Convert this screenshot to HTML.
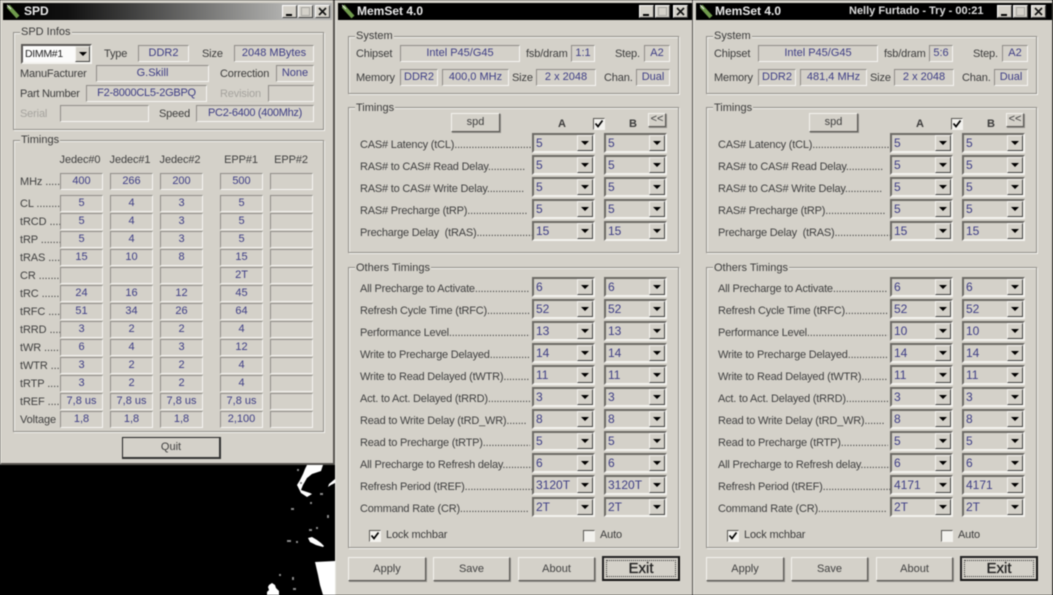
<!DOCTYPE html>
<html><head><meta charset="utf-8"><title>MemSet</title>
<style>
html,body{margin:0;padding:0;background:#000;width:1053px;height:595px;overflow:hidden}
#p{position:absolute;left:0;top:0;width:1053px;height:595px;overflow:hidden;background:#000;filter:blur(.4px);font:11px "Liberation Sans",Arial,sans-serif;color:#3c3c3c}
.w{position:absolute;top:0;background:#d4d1c9;box-sizing:border-box;border-left:1px solid #e8e6e0;border-right:1px solid #55534f}
.w>*,.r>*{position:absolute}
.tb{left:2px;top:3px;height:17px;background:#000;color:#e8e8e8;font-weight:bold;font-size:12px;line-height:17px;white-space:nowrap}
.tb span{position:absolute;top:0}
.tb svg{position:absolute;left:4px;top:1px}
.wb{width:15px;height:13px;top:5px;background:#d4d1c9;box-sizing:border-box;border:1px solid;border-color:#fff #404040 #404040 #fff}
.wb svg{position:absolute;left:0;top:0}
.g{box-sizing:border-box;border:1px solid #918f8a;box-shadow:1px 1px 0 #f4f3ef,inset 1px 1px 0 #f4f3ef}
.lg{line-height:13px;background:#d4d1c9;padding:0 1px;white-space:nowrap}
.l{line-height:14px;white-space:nowrap;letter-spacing:-.15px}
.d{color:#a5a39e}
.b{box-sizing:border-box;border:1px solid;border-color:#8f8d88 #f6f5f2 #f6f5f2 #8f8d88;color:#3d3d85;text-align:center;white-space:nowrap;overflow:hidden}
.b16{height:17px;line-height:14px}
.r{position:absolute;left:0;width:100%;height:20px}
.r u{left:24px;top:5px;width:172px;overflow:hidden;text-decoration:none;line-height:14px;white-space:nowrap;color:#404040;letter-spacing:-.2px}
.c{top:0;width:63px;height:20px;box-sizing:border-box;border:2px solid;border-color:#6c6a66 #f4f3ef #f4f3ef #6c6a66;background:#d4d1c9;color:#3d3d85;font-size:12px;line-height:17px;padding-left:2px}
.ca{left:196px}.cb{left:268px}
.c i{position:absolute;right:0;top:0;width:16px;height:16px;box-sizing:border-box;background:#d4d1c9;border:1px solid;border-color:#f4f3ef #404040 #404040 #f4f3ef}
.c i:after{content:"";position:absolute;left:3px;top:5px;border:4px solid transparent;border-top:4px solid #000;border-bottom:0}
.t{position:absolute;left:0;width:100%;height:17px}
.t>*{position:absolute;top:0}
.t u{left:19px;top:2px;text-decoration:none;line-height:14px;white-space:nowrap;width:40px;overflow:hidden;color:#404040;letter-spacing:-.1px}
.j0{left:59px;width:43px}.j1{left:109px;width:43px}.j2{left:159px;width:43px}.j3{left:219px;width:43px}.j4{left:269px;width:43px}
.h{text-align:center;line-height:14px;width:50px;top:153px;white-space:nowrap;color:#404040;letter-spacing:-.1px}
.btn{box-sizing:border-box;border:1px solid;border-color:#f4f3ef #55534f #55534f #f4f3ef;text-align:center;background:#d4d1c9;color:#404040;box-shadow:1px 1px 0 #918f8a}
.ck{box-sizing:border-box;width:12px;height:12px;border:1px solid;border-color:#5a5855 #f4f3ef #f4f3ef #5a5855;background:#f2f1ed}
.ck svg{position:absolute;left:0;top:0}
.ex{box-sizing:border-box;border:2px solid;border-color:#222 #111 #111 #222;text-align:center;font-size:15px;color:#222;-webkit-text-stroke:.3px #222}
.ex:after{content:"";position:absolute;left:2px;top:2px;right:2px;bottom:2px;border:1px dotted #333}
</style></head><body><div id="p">

<svg style="position:absolute;left:255px;top:460px" width="85" height="135" viewBox="0 0 85 135" fill="#fff">
<path d="M52 5l16 0-2 6-9 3-5 4-4 7-2 5 9 3 2 1-5 3-6-4-2-4-2-4 3-5 3-6 2-5z"/>
<path d="M74 24l6-5 0 4-4 2-3 2z"/>
<path d="M53 78l4-1 5 3 4 3 3 3-1 1-7-2-6-3z"/>
<path d="M60 102l20-1 0 34-12 0-3-10-2-10z"/>
<path d="M14 125l3-2 3 2 1 3 3 3 0 4-12 0 0-3 2-2-1-3z"/>
<g fill="#8a8a8a"><rect x="42" y="9" width="2" height="2"/><rect x="45" y="22" width="2" height="2"/><rect x="36" y="48" width="3" height="2"/><rect x="65" y="33" width="3" height="2"/><rect x="72" y="55" width="2" height="3"/><rect x="54" y="69" width="3" height="2"/><rect x="61" y="67" width="2" height="2"/><rect x="32" y="80" width="4" height="2"/><rect x="41" y="81" width="2" height="2"/><rect x="37" y="117" width="2" height="3"/><rect x="38" y="128" width="3" height="2"/><rect x="24" y="114" width="2" height="2"/><rect x="55" y="42" width="2" height="2"/></g>
</svg>

<!-- SPD -->
<div class="w" style="left:0;width:335px;height:465px;border-bottom:2px solid #55534f;border-right:2px solid #55534f">
<div class="tb" style="width:329px;background:linear-gradient(90deg,#000 0,#111 20%,#b0b0ae 85%)">
<svg width="14" height="16" viewBox="0 0 14 16"><path d="M1 2l10 11" stroke="#6f9a4c" stroke-width="4"/><path d="M0 1l4 4" stroke="#e8e8e8"/></svg><span style="left:21px">SPD</span></div>
<div class="wb" style="left:281px"><svg width="13" height="11"><rect x="3" y="8" width="6" height="2" fill="#000"/></svg></div>
<div class="wb" style="left:297px"><svg width="13" height="11"><rect x="2.5" y="1.5" width="8" height="8" fill="none" stroke="#a8a6a2"/></svg></div>
<div class="wb" style="left:314px"><svg width="13" height="11"><path d="M3 2l7 7M10 2l-7 7" stroke="#111" stroke-width="1.6"/></svg></div>

<div class="g" style="left:12px;top:32px;width:311px;height:98px"></div>
<div class="lg" style="left:19px;top:26px">SPD Infos</div>
<div style="left:20px;top:44px;width:71px;height:20px;box-sizing:border-box;border:2px solid;border-color:#5a5855 #f4f3ef #f4f3ef #5a5855;background:#fbfbfa;color:#222;line-height:17px;padding-left:2px;font-size:10.5px;letter-spacing:-.3px">DIMM#1</div>
<div style="left:74px;top:46px;width:15px;height:16px;box-sizing:border-box;background:#d4d1c9;border:1px solid;border-color:#f4f3ef #404040 #404040 #f4f3ef"><div style="position:absolute;left:3px;top:5px;border:4px solid transparent;border-top:4px solid #000;border-bottom:0"></div></div>
<div class="l" style="left:103px;top:47px">Type</div>
<div class="b b16" style="left:137px;top:45px;width:51px">DDR2</div>
<div class="l" style="left:201px;top:47px">Size</div>
<div class="b b16" style="left:233px;top:45px;width:80px">2048 MBytes</div>
<div class="l" style="left:19px;top:67px">ManuFacturer</div>
<div class="b b16" style="left:95px;top:65px;width:113px">G.Skill</div>
<div class="l" style="left:219px;top:67px">Correction</div>
<div class="b b16" style="left:275px;top:65px;width:38px">None</div>
<div class="l" style="left:19px;top:87px;letter-spacing:-.25px">Part Number</div>
<div class="b b16" style="left:85px;top:85px;width:121px;letter-spacing:-.25px">F2-8000CL5-2GBPQ</div>
<div class="l d" style="left:219px;top:87px">Revision</div>
<div class="b b16" style="left:267px;top:85px;width:46px"></div>
<div class="l d" style="left:19px;top:107px">Serial</div>
<div class="b b16" style="left:59px;top:105px;width:89px"></div>
<div class="l" style="left:158px;top:107px">Speed</div>
<div class="b b16" style="left:195px;top:105px;width:118px;letter-spacing:-.3px">PC2-6400 (400Mhz)</div>

<div class="g" style="left:12px;top:140px;width:311px;height:292px"></div>
<div class="lg" style="left:19px;top:134px">Timings</div>
<div class="h" style="left:54px">Jedec#0</div><div class="h" style="left:104px">Jedec#1</div><div class="h" style="left:154px">Jedec#2</div><div class="h" style="left:215px">EPP#1</div><div class="h" style="left:265px">EPP#2</div>

<div class="t" style="top:173px"><u>MHz .......</u><div class="b b16 j0">400</div><div class="b b16 j1">266</div><div class="b b16 j2">200</div><div class="b b16 j3">500</div><div class="b b16 j4"></div></div>
<div class="t" style="top:195px"><u>CL ..............</u><div class="b b16 j0">5</div><div class="b b16 j1">4</div><div class="b b16 j2">3</div><div class="b b16 j3">5</div><div class="b b16 j4"></div></div>
<div class="t" style="top:213px"><u>tRCD .....</u><div class="b b16 j0">5</div><div class="b b16 j1">4</div><div class="b b16 j2">3</div><div class="b b16 j3">5</div><div class="b b16 j4"></div></div>
<div class="t" style="top:231px"><u>tRP ..........</u><div class="b b16 j0">5</div><div class="b b16 j1">4</div><div class="b b16 j2">3</div><div class="b b16 j3">5</div><div class="b b16 j4"></div></div>
<div class="t" style="top:249px"><u>tRAS .....</u><div class="b b16 j0">15</div><div class="b b16 j1">10</div><div class="b b16 j2">8</div><div class="b b16 j3">15</div><div class="b b16 j4"></div></div>
<div class="t" style="top:267px"><u>CR ..............</u><div class="b b16 j0"></div><div class="b b16 j1"></div><div class="b b16 j2"></div><div class="b b16 j3">2T</div><div class="b b16 j4"></div></div>
<div class="t" style="top:285px"><u>tRC ..........</u><div class="b b16 j0">24</div><div class="b b16 j1">16</div><div class="b b16 j2">12</div><div class="b b16 j3">45</div><div class="b b16 j4"></div></div>
<div class="t" style="top:303px"><u>tRFC .....</u><div class="b b16 j0">51</div><div class="b b16 j1">34</div><div class="b b16 j2">26</div><div class="b b16 j3">64</div><div class="b b16 j4"></div></div>
<div class="t" style="top:321px"><u>tRRD ....</u><div class="b b16 j0">3</div><div class="b b16 j1">2</div><div class="b b16 j2">2</div><div class="b b16 j3">4</div><div class="b b16 j4"></div></div>
<div class="t" style="top:339px"><u>tWR .......</u><div class="b b16 j0">6</div><div class="b b16 j1">4</div><div class="b b16 j2">3</div><div class="b b16 j3">12</div><div class="b b16 j4"></div></div>
<div class="t" style="top:357px"><u>tWTR ....</u><div class="b b16 j0">3</div><div class="b b16 j1">2</div><div class="b b16 j2">2</div><div class="b b16 j3">4</div><div class="b b16 j4"></div></div>
<div class="t" style="top:375px"><u>tRTP ......</u><div class="b b16 j0">3</div><div class="b b16 j1">2</div><div class="b b16 j2">2</div><div class="b b16 j3">4</div><div class="b b16 j4"></div></div>
<div class="t" style="top:393px"><u>tREF .....</u><div class="b b16 j0">7,8 us</div><div class="b b16 j1">7,8 us</div><div class="b b16 j2">7,8 us</div><div class="b b16 j3">7,8 us</div><div class="b b16 j4"></div></div>
<div class="t" style="top:411px"><u>Voltage</u><div class="b b16 j0">1,8</div><div class="b b16 j1">1,8</div><div class="b b16 j2">1,8</div><div class="b b16 j3">2,100</div><div class="b b16 j4"></div></div>

<div class="btn" style="left:121px;top:437px;width:99px;height:22px;line-height:19px;border:1px solid #222;border-right:2px solid #333;border-bottom:2px solid #333;box-shadow:none">Quit</div>
</div>

<!-- MemSet 1 -->
<div class="w" style="left:335px;width:358px;height:595px">
<div class="tb" style="width:354px"><svg width="14" height="16" viewBox="0 0 14 16"><path d="M1 2l10 11" stroke="#6f9a4c" stroke-width="4"/><path d="M0 1l4 4" stroke="#e8e8e8"/></svg><span style="left:19px">MemSet 4.0</span></div>
<div class="wb" style="left:303px"><svg width="13" height="11"><rect x="3" y="8" width="6" height="2" fill="#000"/></svg></div>
<div class="wb" style="left:319px"><svg width="13" height="11"><rect x="2.5" y="1.5" width="8" height="8" fill="none" stroke="#a8a6a2"/></svg></div>
<div class="wb" style="left:337px"><svg width="13" height="11"><path d="M3 2l7 7M10 2l-7 7" stroke="#111" stroke-width="1.6"/></svg></div>

<div class="g" style="left:12px;top:36px;width:331px;height:58px"></div>
<div class="lg" style="left:19px;top:30px">System</div>
<div class="l" style="left:20px;top:47px">Chipset</div>
<div class="b b16" style="left:64px;top:45px;width:120px">Intel P45/G45</div>
<div class="l" style="left:190px;top:47px">fsb/dram</div>
<div class="b b16" style="left:235px;top:45px;width:24px">1:1</div>
<div class="l" style="left:279px;top:47px">Step.</div>
<div class="b b16" style="left:308px;top:45px;width:26px">A2</div>
<div class="l" style="left:20px;top:71px">Memory</div>
<div class="b b16" style="left:64px;top:69px;width:38px">DDR2</div>
<div class="b b16" style="left:106px;top:69px;width:67px">400,0 MHz</div>
<div class="l" style="left:176px;top:71px">Size</div>
<div class="b b16" style="left:200px;top:69px;width:60px">2 x 2048</div>
<div class="l" style="left:268px;top:71px">Chan.</div>
<div class="b b16" style="left:300px;top:69px;width:34px">Dual</div>

<div class="g" style="left:12px;top:107px;width:331px;height:146px"></div>
<div class="lg" style="left:19px;top:102px">Timings</div>
<div class="btn" style="left:115px;top:113px;width:49px;height:19px;line-height:16px">spd</div>
<div class="l" style="left:222px;top:117px;font-weight:bold">A</div>
<div class="ck" style="left:257px;top:118px"><svg width="10" height="10"><path d="M1.5 4.5l2.5 3 4.5-6" fill="none" stroke="#000" stroke-width="1.7"/></svg></div>
<div class="l" style="left:293px;top:117px;font-weight:bold">B</div>
<div class="btn" style="left:312px;top:113px;width:18px;height:14px;line-height:10px">&lt;&lt;</div>

<div class="r" style="top:133px"><u>CAS# Latency (tCL)..............................................</u><div class="c ca">5<i></i></div><div class="c cb">5<i></i></div></div>
<div class="r" style="top:155px"><u style="width:165px">RAS# to CAS# Read Delay..............................</u><div class="c ca">5<i></i></div><div class="c cb">5<i></i></div></div>
<div class="r" style="top:177px"><u style="width:165px">RAS# to CAS# Write Delay..............................</u><div class="c ca">5<i></i></div><div class="c cb">5<i></i></div></div>
<div class="r" style="top:199px"><u style="width:168px">RAS# Precharge (tRP)......................................</u><div class="c ca">5<i></i></div><div class="c cb">5<i></i></div></div>
<div class="r" style="top:221px"><u>Precharge Delay&nbsp; (tRAS)...................................</u><div class="c ca">15<i></i></div><div class="c cb">15<i></i></div></div>

<div class="g" style="left:12px;top:267px;width:331px;height:281px"></div>
<div class="lg" style="left:19px;top:262px">Others Timings</div>
<div class="r" style="top:277px"><u style="width:170px">All Precharge to Activate......................................</u><div class="c ca">6<i></i></div><div class="c cb">6<i></i></div></div>
<div class="r" style="top:299px"><u style="width:170px">Refresh Cycle Time (tRFC)..............................</u><div class="c ca">52<i></i></div><div class="c cb">52<i></i></div></div>
<div class="r" style="top:321px"><u style="width:170px">Performance Level.............................................</u><div class="c ca">13<i></i></div><div class="c cb">13<i></i></div></div>
<div class="r" style="top:343px"><u style="width:170px">Write to Precharge Delayed..............................</u><div class="c ca">14<i></i></div><div class="c cb">14<i></i></div></div>
<div class="r" style="top:365px"><u style="width:170px">Write to Read Delayed (tWTR)..........................</u><div class="c ca">11<i></i></div><div class="c cb">11<i></i></div></div>
<div class="r" style="top:387px"><u style="width:170px">Act. to Act. Delayed (tRRD)................................</u><div class="c ca">3<i></i></div><div class="c cb">3<i></i></div></div>
<div class="r" style="top:409px"><u style="width:166px">Read to Write Delay (tRD_WR)..........................</u><div class="c ca">8<i></i></div><div class="c cb">8<i></i></div></div>
<div class="r" style="top:431px"><u style="width:170px">Read to Precharge (tRTP)..................................</u><div class="c ca">5<i></i></div><div class="c cb">5<i></i></div></div>
<div class="r" style="top:453px"><u>All Precharge to Refresh delay..........................</u><div class="c ca">6<i></i></div><div class="c cb">6<i></i></div></div>
<div class="r" style="top:475px"><u>Refresh Period (tREF)......................................</u><div class="c ca">3120T<i></i></div><div class="c cb">3120T<i></i></div></div>
<div class="r" style="top:497px"><u style="width:168px">Command Rate (CR)........................................</u><div class="c ca">2T<i></i></div><div class="c cb">2T<i></i></div></div>

<div class="ck" style="left:33px;top:530px"><svg width="10" height="10"><path d="M1.5 4.5l2.5 3 4.5-6" fill="none" stroke="#000" stroke-width="1.7"/></svg></div>
<div class="l" style="left:50px;top:528px">Lock mchbar</div>
<div class="ck" style="left:247px;top:530px"></div>
<div class="l" style="left:264px;top:528px">Auto</div>

<div class="btn" style="left:12px;top:557px;width:78px;height:24px;line-height:22px">Apply</div>
<div class="btn" style="left:97px;top:557px;width:77px;height:24px;line-height:22px">Save</div>
<div class="btn" style="left:182px;top:557px;width:77px;height:24px;line-height:22px">About</div>
<div class="ex" style="left:266px;top:556px;width:78px;height:25px;line-height:21px">Exit</div>
</div>

<!-- MemSet 2 -->
<div class="w" style="left:693px;width:360px;height:595px">
<div class="tb" style="width:356px"><svg width="14" height="16" viewBox="0 0 14 16"><path d="M1 2l10 11" stroke="#6f9a4c" stroke-width="4"/><path d="M0 1l4 4" stroke="#e8e8e8"/></svg><span style="left:19px">MemSet 4.0</span><span style="left:153px;color:#dcdcdc;font-size:11px">Nelly Furtado - Try - 00:21</span></div>
<div class="wb" style="left:303px"><svg width="13" height="11"><rect x="3" y="8" width="6" height="2" fill="#000"/></svg></div>
<div class="wb" style="left:319px"><svg width="13" height="11"><rect x="2.5" y="1.5" width="8" height="8" fill="none" stroke="#a8a6a2"/></svg></div>
<div class="wb" style="left:337px"><svg width="13" height="11"><path d="M3 2l7 7M10 2l-7 7" stroke="#111" stroke-width="1.6"/></svg></div>

<div class="g" style="left:12px;top:36px;width:331px;height:58px"></div>
<div class="lg" style="left:19px;top:30px">System</div>
<div class="l" style="left:20px;top:47px">Chipset</div>
<div class="b b16" style="left:64px;top:45px;width:120px">Intel P45/G45</div>
<div class="l" style="left:190px;top:47px">fsb/dram</div>
<div class="b b16" style="left:235px;top:45px;width:24px">5:6</div>
<div class="l" style="left:279px;top:47px">Step.</div>
<div class="b b16" style="left:308px;top:45px;width:26px">A2</div>
<div class="l" style="left:20px;top:71px">Memory</div>
<div class="b b16" style="left:64px;top:69px;width:38px">DDR2</div>
<div class="b b16" style="left:106px;top:69px;width:67px">481,4 MHz</div>
<div class="l" style="left:176px;top:71px">Size</div>
<div class="b b16" style="left:200px;top:69px;width:60px">2 x 2048</div>
<div class="l" style="left:268px;top:71px">Chan.</div>
<div class="b b16" style="left:300px;top:69px;width:34px">Dual</div>

<div class="g" style="left:12px;top:107px;width:331px;height:146px"></div>
<div class="lg" style="left:19px;top:102px">Timings</div>
<div class="btn" style="left:115px;top:113px;width:49px;height:19px;line-height:16px">spd</div>
<div class="l" style="left:222px;top:117px;font-weight:bold">A</div>
<div class="ck" style="left:257px;top:118px"><svg width="10" height="10"><path d="M1.5 4.5l2.5 3 4.5-6" fill="none" stroke="#000" stroke-width="1.7"/></svg></div>
<div class="l" style="left:293px;top:117px;font-weight:bold">B</div>
<div class="btn" style="left:312px;top:113px;width:18px;height:14px;line-height:10px">&lt;&lt;</div>

<div class="r" style="top:133px"><u>CAS# Latency (tCL)..............................................</u><div class="c ca">5<i></i></div><div class="c cb">5<i></i></div></div>
<div class="r" style="top:155px"><u style="width:165px">RAS# to CAS# Read Delay..............................</u><div class="c ca">5<i></i></div><div class="c cb">5<i></i></div></div>
<div class="r" style="top:177px"><u style="width:165px">RAS# to CAS# Write Delay..............................</u><div class="c ca">5<i></i></div><div class="c cb">5<i></i></div></div>
<div class="r" style="top:199px"><u style="width:168px">RAS# Precharge (tRP)......................................</u><div class="c ca">5<i></i></div><div class="c cb">5<i></i></div></div>
<div class="r" style="top:221px"><u>Precharge Delay&nbsp; (tRAS)...................................</u><div class="c ca">15<i></i></div><div class="c cb">15<i></i></div></div>

<div class="g" style="left:12px;top:267px;width:331px;height:281px"></div>
<div class="lg" style="left:19px;top:262px">Others Timings</div>
<div class="r" style="top:277px"><u style="width:170px">All Precharge to Activate......................................</u><div class="c ca">6<i></i></div><div class="c cb">6<i></i></div></div>
<div class="r" style="top:299px"><u style="width:170px">Refresh Cycle Time (tRFC)..............................</u><div class="c ca">52<i></i></div><div class="c cb">52<i></i></div></div>
<div class="r" style="top:321px"><u style="width:170px">Performance Level.............................................</u><div class="c ca">10<i></i></div><div class="c cb">10<i></i></div></div>
<div class="r" style="top:343px"><u style="width:170px">Write to Precharge Delayed..............................</u><div class="c ca">14<i></i></div><div class="c cb">14<i></i></div></div>
<div class="r" style="top:365px"><u style="width:170px">Write to Read Delayed (tWTR)..........................</u><div class="c ca">11<i></i></div><div class="c cb">11<i></i></div></div>
<div class="r" style="top:387px"><u style="width:170px">Act. to Act. Delayed (tRRD)................................</u><div class="c ca">3<i></i></div><div class="c cb">3<i></i></div></div>
<div class="r" style="top:409px"><u style="width:166px">Read to Write Delay (tRD_WR)..........................</u><div class="c ca">8<i></i></div><div class="c cb">8<i></i></div></div>
<div class="r" style="top:431px"><u style="width:170px">Read to Precharge (tRTP)..................................</u><div class="c ca">5<i></i></div><div class="c cb">5<i></i></div></div>
<div class="r" style="top:453px"><u>All Precharge to Refresh delay..........................</u><div class="c ca">6<i></i></div><div class="c cb">6<i></i></div></div>
<div class="r" style="top:475px"><u>Refresh Period (tREF)......................................</u><div class="c ca">4171<i></i></div><div class="c cb">4171<i></i></div></div>
<div class="r" style="top:497px"><u style="width:168px">Command Rate (CR)........................................</u><div class="c ca">2T<i></i></div><div class="c cb">2T<i></i></div></div>

<div class="ck" style="left:33px;top:530px"><svg width="10" height="10"><path d="M1.5 4.5l2.5 3 4.5-6" fill="none" stroke="#000" stroke-width="1.7"/></svg></div>
<div class="l" style="left:50px;top:528px">Lock mchbar</div>
<div class="ck" style="left:247px;top:530px"></div>
<div class="l" style="left:264px;top:528px">Auto</div>

<div class="btn" style="left:12px;top:557px;width:78px;height:24px;line-height:22px">Apply</div>
<div class="btn" style="left:97px;top:557px;width:77px;height:24px;line-height:22px">Save</div>
<div class="btn" style="left:182px;top:557px;width:77px;height:24px;line-height:22px">About</div>
<div class="ex" style="left:266px;top:556px;width:78px;height:25px;line-height:21px">Exit</div>
</div>

</div></body></html>
